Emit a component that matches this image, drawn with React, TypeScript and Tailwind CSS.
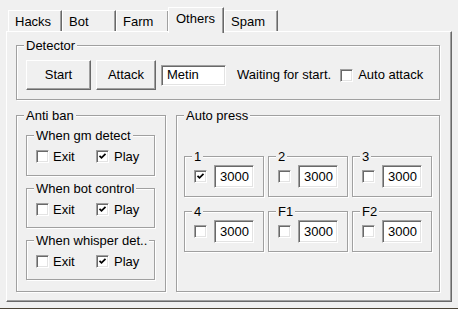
import React from 'react';

const font = "font-['Liberation_Sans',Arial,sans-serif]";
const sunken =
  'border border-t-[#a0a0a0] border-l-[#a0a0a0] border-r-white border-b-white shadow-[inset_1px_1px_0_#696969,inset_-1px_-1px_0_#e3e3e3]';
const raised =
  'border border-t-white border-l-white border-r-[#696969] border-b-[#696969] shadow-[inset_-1px_-1px_0_#a0a0a0]';

function Group({ label, className, children }: { label: string; className: string; children?: React.ReactNode }) {
  return (
    <div className={`relative border border-[#a0a0a0] shadow-[inset_1px_1px_0_#fff,1px_1px_0_#fff] ${className}`}>
      <span className="absolute -top-[8px] left-[7px] bg-[#f0f0f0] px-[2px] leading-[15px] whitespace-nowrap">
        {label}
      </span>
      {children}
    </div>
  );
}

function Check({ checked }: { checked?: boolean }) {
  return (
    <span className={`flex size-[13px] shrink-0 items-center justify-center bg-white ${sunken}`}>
      {checked && (
        <svg width="9" height="9" viewBox="0 0 9 9">
          <path d="M1.5 3.8 L3.5 5.8 L7.5 1.8" fill="none" stroke="#000" strokeWidth="1.7" />
        </svg>
      )}
    </span>
  );
}

function Field({ value, className }: { value: string; className: string }) {
  return <div className={`flex items-center bg-white pl-[5px] ${sunken} ${className}`}>{value}</div>;
}

function Button({ label, className }: { label: string; className: string }) {
  return <div className={`flex items-center justify-center bg-[#f0f0f0] ${raised} ${className}`}>{label}</div>;
}

const tabs = [
  { name: 'Hacks', w: 'w-[54px]' },
  { name: 'Bot', w: 'w-[54px]' },
  { name: 'Farm', w: 'w-[53px]' },
  { name: 'Others', w: 'w-[56px]', active: true },
  { name: 'Spam', w: 'w-[54px]' },
];

function Reaction({ label, h }: { label: string; h: string }) {
  return (
    <Group label={label} className={`w-[129px] ${h}`}>
      <div className="flex items-center pl-[9px] pt-[13px]">
        <div className="flex w-[60px] items-center">
          <Check />
          <span className="ml-[4px] leading-[15px]">Exit</span>
        </div>
        <Check checked />
        <span className="ml-[5px] leading-[15px]">Play</span>
      </div>
    </Group>
  );
}

const keys = [
  { k: '1', on: true },
  { k: '2' },
  { k: '3' },
  { k: '4' },
  { k: 'F1' },
  { k: 'F2' },
];

export default function App() {
  return (
    <div className={`flex h-[309px] w-[458px] flex-col bg-[#f0f0f0] text-[13px] text-black ${font}`}>
      <div className="flex h-[31px] items-end pl-[8px]">
        {tabs.map((t) =>
          t.active ? (
            <div
              key={t.name}
              className={`relative z-10 -mb-[2px] -ml-[1px] h-[26px] ${t.w} border-l border-t border-r border-l-white border-t-white border-r-[#696969] bg-[#f0f0f0] pl-[7px] pt-[3px] leading-[15px] shadow-[inset_-1px_0_0_#a0a0a0]`}
            >
              {t.name}
            </div>
          ) : (
            <div
              key={t.name}
              className={`h-[21px] ${t.w} border-l border-t border-r border-l-white border-t-white border-r-[#696969] pl-[6px] pt-[3px] leading-[15px] shadow-[inset_-1px_0_0_#a0a0a0]`}
            >
              {t.name}
            </div>
          ),
        )}
      </div>
      <div className={`ml-[6px] h-[271px] w-[446px] pl-[9px] pt-[13px] ${raised}`}>
        <Group label="Detector" className="h-[55px] w-[424px]">
          <div className="flex h-[30px] items-center pl-[9px] mt-[14px]">
            <Button label="Start" className="h-[30px] w-[65px]" />
            <Button label="Attack" className="ml-[5px] h-[30px] w-[60px]" />
            <Field value="Metin" className="ml-[5px] h-[21px] w-[65px]" />
            <span className="ml-[11px] whitespace-nowrap">Waiting for start.</span>
            <span className="ml-[9px]">
              <Check />
            </span>
            <span className="ml-[5px] whitespace-nowrap">Auto attack</span>
          </div>
        </Group>
        <div className="mt-[15px] flex gap-[10px]">
          <Group label="Anti ban" className="h-[177px] w-[150px]">
            <div className="flex flex-col gap-[12px] pl-[9px] pt-[19px]">
              <Reaction label="When gm detect" h="h-[41px]" />
              <Reaction label="When bot control" h="h-[40px]" />
              <Reaction label="When whisper det.." h="h-[40px]" />
            </div>
          </Group>
          <Group label="Auto press" className="h-[177px] w-[264px]">
            <div className="grid grid-cols-[80px_80px_80px] gap-x-[4px] gap-y-[14px] pl-[7px] pt-[40px]">
              {keys.map((k) => (
                <Group key={k.k} label={k.k} className="h-[41px] w-[80px]">
                  <div className="flex items-center pl-[9px] pt-[8px]">
                    <Check checked={k.on} />
                    <Field value="3000" className="ml-[7px] h-[23px] w-[40px]" />
                  </div>
                </Group>
              ))}
            </div>
          </Group>
        </div>
      </div>
      <div className="mt-auto h-[1px] bg-[#4b4437]" />
    </div>
  );
}
